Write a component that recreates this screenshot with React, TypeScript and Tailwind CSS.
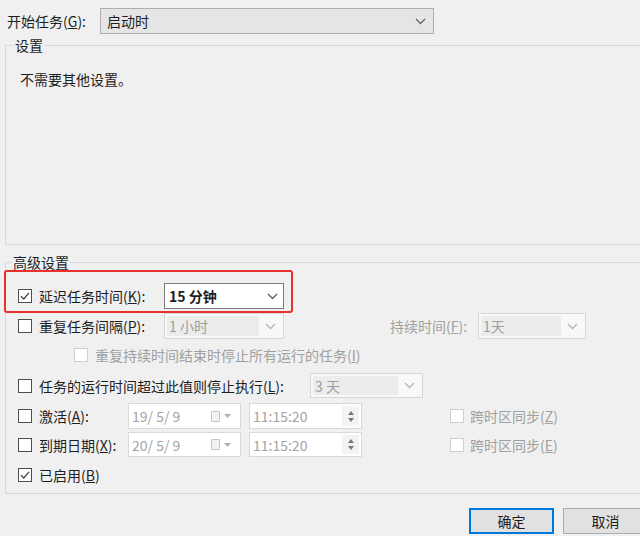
import React from "react";

function Chevron({ color = "#5a5a5a" }: { color?: string }) {
  return (
    <svg width="11" height="7" viewBox="0 0 11 7">
      <polyline points="1,1 5.5,5.5 10,1" fill="none" stroke={color} strokeWidth="1.3" />
    </svg>
  );
}

function Check({ checked, disabled }: { checked?: boolean; disabled?: boolean }) {
  return (
    <span
      className={
        "flex h-[14px] w-[14px] shrink-0 items-center justify-center border bg-white " +
        (disabled ? "border-[#cfcfcf]" : "border-[#4d4d4d]")
      }
    >
      {checked && (
        <svg width="12" height="12" viewBox="0 0 12 12">
          <path d="M2 6.3 L4.8 9 L10 2.8" fill="none" stroke="#444" strokeWidth="1.3" />
        </svg>
      )}
    </span>
  );
}

function Combo({
  text,
  width,
  disabled,
  bold,
}: {
  text: string;
  width: string;
  disabled?: boolean;
  bold?: boolean;
}) {
  if (disabled) {
    return (
      <div className={"flex h-full items-stretch border border-[#d6d6d6] bg-[#f8f8f8] p-[2px] " + width}>
        <div className="flex flex-1 items-center bg-[#ececec] pl-[2px] text-[#9d9d9d]">{text}</div>
        <div className="flex w-[22px] items-center justify-center">
          <Chevron color="#b5b5b5" />
        </div>
      </div>
    );
  }
  return (
    <div className={"flex h-full items-center border border-[#7a7a7a] bg-white pl-[4px] " + width}>
      <span className={"flex-1 " + (bold ? "font-bold" : "")}>{text}</span>
      <span className="flex w-[22px] justify-center">
        <Chevron />
      </span>
    </div>
  );
}

function DateBox({ text }: { text: string }) {
  return (
    <div className="flex h-full w-[113px] items-center border border-[#d9d9d9] bg-white pl-[3px] text-[#a3a3a3]">
      <span className="flex-1">{text}</span>
      <span className="mr-[4px] h-[11px] w-[9px] rounded-[1px] border border-[#c4c4c4] bg-[#f2f2f2]" />
      <svg width="7" height="4" viewBox="0 0 7 4" className="mr-[9px]">
        <polygon points="0,0 7,0 3.5,4" fill="#b0b0b0" />
      </svg>
    </div>
  );
}

function TimeBox() {
  return (
    <div className="flex h-full w-[113px] items-stretch border border-[#d9d9d9] bg-white text-[#a3a3a3]">
      <span className="flex flex-1 items-center pl-[3px]">11:15:20</span>
      <span className="my-[2px] mr-[2px] flex w-[17px] flex-col items-center justify-center gap-[3px] bg-[#f3f3f3]">
        <svg width="6" height="4" viewBox="0 0 6 4">
          <polygon points="0,4 6,4 3,0" fill="#777" />
        </svg>
        <svg width="6" height="4" viewBox="0 0 6 4">
          <polygon points="0,0 6,0 3,4" fill="#777" />
        </svg>
      </span>
    </div>
  );
}

export default function App() {
  return (
    <div className="relative h-[536px] w-[640px] overflow-hidden bg-[#f0f0f0] font-['Noto_Sans_CJK_SC',sans-serif] text-[14px] leading-[16px] text-[#1e1e1e]">
      {/* start task */}
      <div className="flex h-[34px] items-center pt-[8px]">
        <span className="w-[100px] pl-[7px]">开始任务(<u>G</u>):</span>
        <div className="flex h-[26px] w-[334px] items-center border border-[#adadad] bg-[#e5e5e5] pl-[6px]">
          <span className="flex-1">启动时</span>
          <span className="flex w-[26px] justify-center">
            <Chevron color="#666" />
          </span>
        </div>
      </div>

      {/* settings group */}
      <div className="relative ml-[5px] mt-[11px] h-[200px] w-[700px] border border-[#d9d9d9]">
        <span className="absolute left-[8px] top-[-9px] bg-[#f0f0f0] px-[1px]">设置</span>
        <div className="pl-[14px] pt-[25px]">不需要其他设置。</div>
      </div>

      {/* advanced group */}
      <div className="relative ml-[5px] mt-[17px] h-[232px] w-[700px] border border-[#d9d9d9]">
        <span className="absolute left-[6px] top-[-9px] bg-[#f0f0f0] px-[1px]">高级设置</span>

        <div className="mt-[20px] flex h-[26px] items-center pl-[12px]">
          <Check checked />
          <span className="ml-[7px] w-[125px]">延迟任务时间(<u>K</u>):</span>
          <Combo text="15 分钟" width="w-[120px]" bold />
        </div>

        <div className="mt-[4px] flex h-[26px] items-center pl-[12px]">
          <Check />
          <span className="ml-[7px] w-[125px]">重复任务间隔(<u>P</u>):</span>
          <Combo text="1 小时" width="w-[120px]" disabled />
          <span className="ml-[106px] w-[88px] text-[#a0a0a0]">持续时间(<u>F</u>):</span>
          <Combo text="1天" width="w-[108px]" disabled />
        </div>

        <div className="mt-[8px] flex h-[16px] items-center pl-[68px] text-[#a0a0a0]">
          <Check disabled />
          <span className="ml-[7px]">重复持续时间结束时停止所有运行的任务(<u>I</u>)</span>
        </div>

        <div className="mt-[10px] flex h-[25px] items-center pl-[12px]">
          <Check />
          <span className="ml-[7px] w-[271px]">任务的运行时间超过此值则停止执行(<u>L</u>):</span>
          <Combo text="3 天" width="w-[113px]" disabled />
        </div>

        <div className="mt-[5px] flex h-[26px] items-center pl-[12px]">
          <Check />
          <span className="ml-[7px] w-[89px]">激活(<u>A</u>):</span>
          <DateBox text="19/ 5/ 9" />
          <span className="w-[8px]" />
          <TimeBox />
          <span className="ml-[88px]">
            <Check disabled />
          </span>
          <span className="ml-[6px] text-[#a0a0a0]">跨时区同步(<u>Z</u>)</span>
        </div>

        <div className="mt-[3px] flex h-[25px] items-center pl-[12px]">
          <Check />
          <span className="ml-[7px] w-[89px]">到期日期(<u>X</u>):</span>
          <DateBox text="20/ 5/ 9" />
          <span className="w-[8px]" />
          <TimeBox />
          <span className="ml-[88px]">
            <Check disabled />
          </span>
          <span className="ml-[6px] text-[#a0a0a0]">跨时区同步(<u>E</u>)</span>
        </div>

        <div className="mt-[10px] flex h-[16px] items-center pl-[12px]">
          <Check checked />
          <span className="ml-[7px]">已启用(<u>B</u>)</span>
        </div>
      </div>

      {/* buttons */}
      <div className="mt-[14px] flex h-[26px] gap-[9px] pl-[469px]">
        <button className="h-full w-[85px] shrink-0 border-2 border-[#0078d7] bg-[#e1e1e1]">确定</button>
        <button className="h-full w-[85px] shrink-0 border border-[#adadad] bg-[#e1e1e1]">取消</button>
      </div>

      {/* red highlight annotation */}
      <div className="absolute left-[4px] top-[270px] h-[43px] w-[289px] rounded-[3px] border-2 border-[#e8302c]" />
    </div>
  );
}
